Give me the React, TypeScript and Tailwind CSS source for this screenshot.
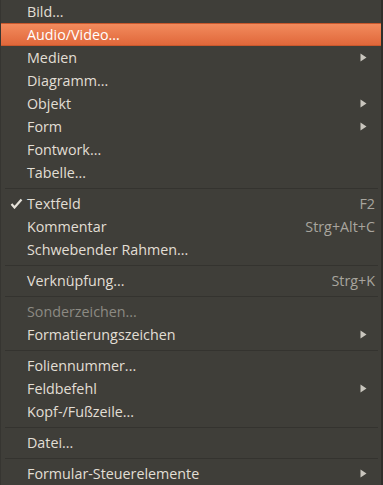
type Item =
  | { kind: 'sep' }
  | {
      kind: 'item'
      label: string
      shortcut?: string
      submenu?: boolean
      checked?: boolean
      disabled?: boolean
      active?: boolean
    }

const ITEMS: Item[] = [
  { kind: 'item', label: 'Bild...' },
  { kind: 'item', label: 'Audio/Video...', active: true },
  { kind: 'item', label: 'Medien', submenu: true },
  { kind: 'item', label: 'Diagramm...' },
  { kind: 'item', label: 'Objekt', submenu: true },
  { kind: 'item', label: 'Form', submenu: true },
  { kind: 'item', label: 'Fontwork...' },
  { kind: 'item', label: 'Tabelle...' },
  { kind: 'sep' },
  { kind: 'item', label: 'Textfeld', shortcut: 'F2', checked: true },
  { kind: 'item', label: 'Kommentar', shortcut: 'Strg+Alt+C' },
  { kind: 'item', label: 'Schwebender Rahmen...' },
  { kind: 'sep' },
  { kind: 'item', label: 'Verknüpfung...', shortcut: 'Strg+K' },
  { kind: 'sep' },
  { kind: 'item', label: 'Sonderzeichen...', disabled: true },
  { kind: 'item', label: 'Formatierungszeichen', submenu: true },
  { kind: 'sep' },
  { kind: 'item', label: 'Foliennummer...' },
  { kind: 'item', label: 'Feldbefehl', submenu: true },
  { kind: 'item', label: 'Kopf-/Fußzeile...' },
  { kind: 'sep' },
  { kind: 'item', label: 'Datei...' },
  { kind: 'sep' },
  { kind: 'item', label: 'Formular-Steuerelemente', submenu: true },
]

function Arrow() {
  return (
    <svg width="7" height="9" viewBox="0 0 7 9" className="shrink-0 mr-[8px]">
      <path d="M0.5 0.5 L6.5 4.5 L0.5 8.5 Z" fill="#c9c6be" />
    </svg>
  )
}

function Check() {
  return (
    <svg width="13" height="11" viewBox="0 0 13 11" className="shrink-0">
      <path d="M1.5 6 L4.5 9.5 L11.5 1.5" fill="none" stroke="#e6e2d9" strokeWidth="2.2" />
    </svg>
  )
}

export default function App() {
  return (
    <div
      className="w-[383px] h-[485px] bg-[#3f3e39] border-l border-r-2 border-l-[#363531] border-r-[#2f2e2b] overflow-hidden text-[14.3px] text-[#e2ded5]"
      style={{ fontFamily: '"Open Sans", "Noto Sans", sans-serif' }}
    >
      {ITEMS.map((item, i) =>
        item.kind === 'sep' ? (
          <div key={i} className="h-[8px] flex items-center pl-1 pr-[3px]">
            <div className="h-px w-full bg-[#34332f]" />
          </div>
        ) : (
          <div
            key={i}
            className={
              'h-[23px] flex items-center pr-[6px] ' +
              (item.active
                ? 'bg-gradient-to-b from-[#f28b5d] to-[#e0673a] border-y border-[#c9582d] text-white'
                : '')
            }
          >
            <div className="w-[26px] pl-[9px] flex items-center">{item.checked && <Check />}</div>
            <span className={'flex-1 whitespace-nowrap ' + (item.disabled ? 'text-[#8c8a83]' : '')}>
              {item.label}
            </span>
            {item.shortcut && <span className="text-[#a8a59e]">{item.shortcut}</span>}
            {item.submenu && <Arrow />}
          </div>
        ),
      )}
    </div>
  )
}
